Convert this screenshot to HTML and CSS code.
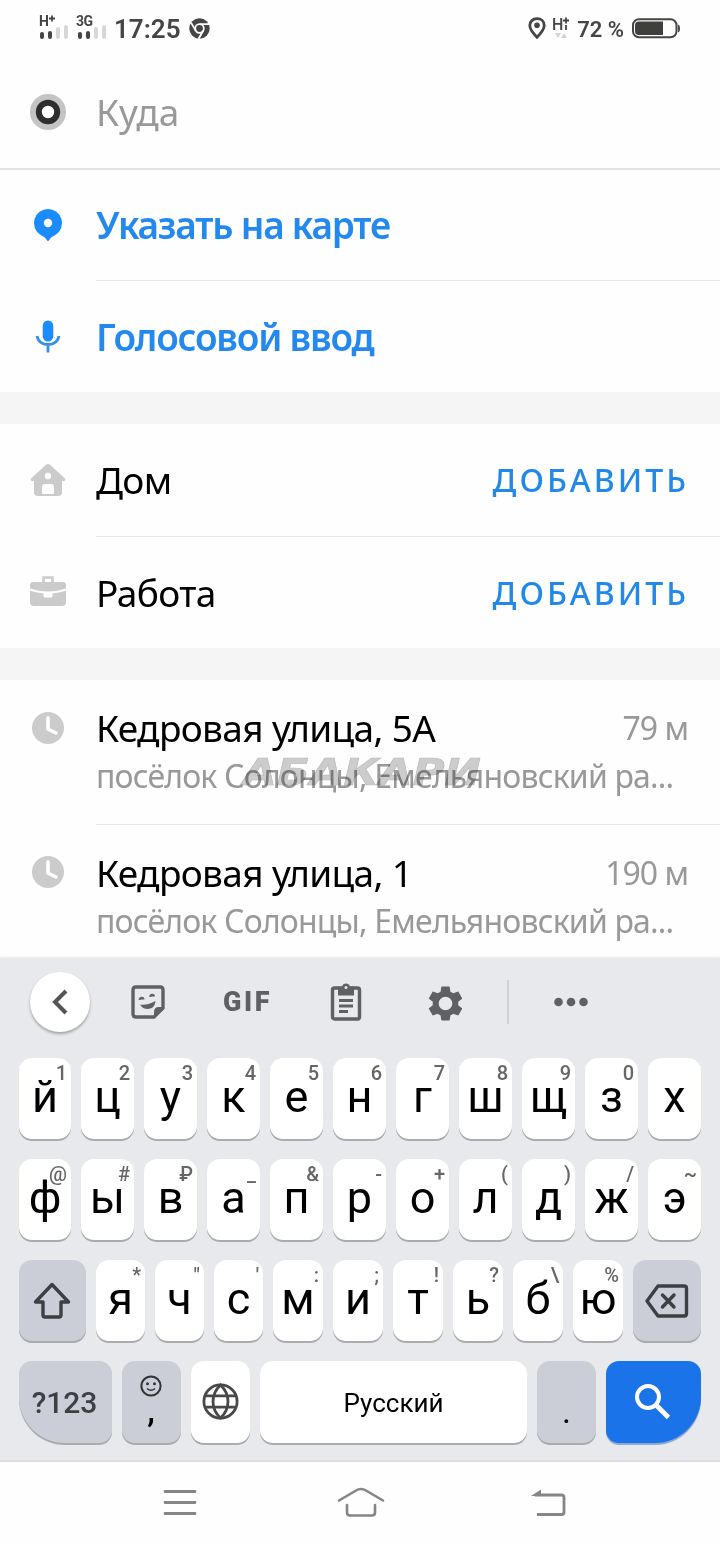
FILE: index.html
```html
<!DOCTYPE html>
<html lang="ru">
<head>
  <meta charset="UTF-8">
  <meta name="viewport" content="width=device-width, initial-scale=1.0">
  <title>Куда</title>
  <link rel="stylesheet" href="styles.css">
</head>
<body>

<!-- Status bar -->
<header class="status-bar">
  <div class="status-left">
    <svg class="signal" width="37" height="28" viewBox="0 0 37 28">
      <text x="0" y="11.500" class="signal-label">H</text>
      <path d="M10 4.500h6M13 1.500v6" stroke="#454545" stroke-width="1.800"/>
      <path d="M3 20v3M11 19v4" class="bar-on"/>
      <path d="M19 15v8M27 13v10" class="bar-off"/>
    </svg>
    <svg class="signal" width="37" height="28" viewBox="0 0 37 28">
      <text x="0" y="11.500" class="signal-label" textLength="17">3G</text>
      <path d="M4 20v3M12 19v4" class="bar-on"/>
      <path d="M20 15v8M28 13v10" class="bar-off"/>
    </svg>
    <span class="time">17:25</span>
    <svg class="chrome" width="21" height="21" viewBox="0 0 21 21">
      <circle cx="10.5" cy="10.5" r="10.2" fill="#454545"/>
      <circle cx="10.5" cy="10.5" r="4.3" fill="none" stroke="#fff" stroke-width="1.8"/>
      <path d="M10.5 6.200H20M6.800 12.700L2 4.600M14.200 12.700L9.600 20.800" stroke="#fff" stroke-width="1.8"/>
    </svg>
  </div>
  <div class="status-right">
    <svg class="location" width="18" height="23" viewBox="0 0 18 23">
      <path d="M9 1.700C4.800 1.700 1.800 4.600 1.800 8.500c0 4.500 4.500 9 7.200 11.800 2.700-2.800 7.200-7.300 7.200-11.800C16.200 4.600 13.200 1.700 9 1.700z" fill="none" stroke="#454545" stroke-width="2.800"/>
      <circle cx="9" cy="8.300" r="2.800" fill="#454545"/>
    </svg>
    <svg class="net" width="18" height="23" viewBox="0 0 18 23">
      <text x="0" y="12.500" class="net-label">H</text>
      <path d="M11 3.500h6M14 0.500v6M14 8v5" stroke="#454545" stroke-width="1.800"/>
      <path d="M3 16h6l-3 5zM9 21h6l-3-5z" fill="#d4d4d4"/>
    </svg>
    <span class="percent">72 %</span>
    <svg width="49" height="21" viewBox="0 0 49 21">
      <rect x="1" y="1.200" width="43.500" height="18" rx="6" fill="none" stroke="#454545" stroke-width="2"/>
      <path d="M7 3.500h24v13.500H7a4 4 0 0 1-4-4v-5.500a4 4 0 0 1 4-4z" fill="#3f3f3c"/>
      <path d="M46 6.500q2 .5 2 4t-2 4z" fill="#454545"/>
    </svg>
  </div>
</header>

<main class="content">
  <!-- Destination input -->
  <div class="row row-search">
    <svg class="icon" width="36" height="36" viewBox="0 0 36 36">
      <circle cx="18" cy="18" r="18" fill="#c4c4c4"/>
      <circle cx="18" cy="18" r="9.200" fill="#fff" stroke="#2e2e2e" stroke-width="6"/>
    </svg>
    <div class="row-body"><span class="title placeholder">Куда</span></div>
  </div>

  <!-- Actions -->
  <div class="row row-map">
    <svg class="icon" width="36" height="36" viewBox="0 0 36 36">
      <path d="M18 1a14 14 0 0 0-7.600 25.800c2.800 1.800 5 2.700 6.300 5.200.6 1.300 2 1.300 2.600 0 1.300-2.500 3.500-3.400 6.300-5.200A14 14 0 0 0 18 1z" fill="#1a8cff"/>
      <circle cx="18" cy="15" r="4.200" fill="#fff"/>
    </svg>
    <div class="row-body"><span class="title action">Указать на карте</span></div>
  </div>
  <div class="row row-last">
    <svg class="icon" width="36" height="36" viewBox="0 0 36 36">
      <rect x="12.700" y="1.500" width="10.600" height="21" rx="5.300" fill="#1a8cff"/>
      <path d="M7 17c1 5.500 5 8.500 11 8.500s10-3 11-8.500M18 25.500v8" fill="none" stroke="#3290e8" stroke-width="2.800"/>
    </svg>
    <div class="row-body"><span class="title action">Голосовой ввод</span></div>
  </div>

  <div class="divider"></div>

  <!-- Saved places -->
  <div class="row row-home">
    <svg class="icon" width="36" height="36" viewBox="0 0 36 36">
      <path fill-rule="evenodd" fill="#cbcbcb" d="M16 1.800q2-1.700 4 0L35 15.500q1 2.500-1.500 2.500H32v11q0 4-4 4H8q-4 0-4-4V18H2.500Q0 18 1 15.500zM18 9.800a3.200 3.200 0 1 0 0 6.400 3.200 3.200 0 0 0 0-6.400zM12 31h12v-7q0-3-3-3h-6q-3 0-3 3z"/>
    </svg>
    <div class="row-body">
      <span class="title">Дом</span>
      <a class="add">ДОБАВИТЬ</a>
    </div>
  </div>
  <div class="row row-last">
    <svg class="icon" width="36" height="36" viewBox="0 0 36 36">
      <path d="M13.500 8V2.500h9V8" fill="none" stroke="#cbcbcb" stroke-width="2.600"/>
      <path d="M3 7h30q3 0 3 3v3.500q-18 6-36 0V10q0-3 3-3z" fill="#cbcbcb"/>
      <path d="M0 15.800q7 2.200 13.500 2.600V21q0 1.500 1.500 1.500h6q1.500 0 1.500-1.500v-2.600q6.500-.4 13.500-2.600V27q0 4-4 4H4q-4 0-4-4z" fill="#cbcbcb"/>
    </svg>
    <div class="row-body">
      <span class="title">Работа</span>
      <a class="add">ДОБАВИТЬ</a>
    </div>
  </div>

  <div class="divider"></div>

  <!-- Suggestions -->
  <div class="row row-address">
    <svg class="icon" width="36" height="36" viewBox="0 0 36 36">
      <circle cx="18" cy="18" r="16" fill="#cbcbcb"/>
      <path d="M18 8v11l8 4" fill="none" stroke="#fff" stroke-width="3.600" stroke-linecap="round" stroke-linejoin="round"/>
    </svg>
    <div class="row-body">
      <div class="address">
        <span class="title">Кедровая улица, 5А</span>
        <span class="subtitle">посёлок Солонцы, Емельяновский ра...</span>
      </div>
      <span class="distance">79 м</span>
    </div>
    <svg class="watermark" width="244" height="36" viewBox="0 0 244 36">
      <text x="2" y="31.500" textLength="238" lengthAdjust="spacingAndGlyphs">АБАКАРИ</text>
    </svg>
  </div>
  <div class="row row-address row-last">
    <svg class="icon" width="36" height="36" viewBox="0 0 36 36">
      <circle cx="18" cy="18" r="16" fill="#cbcbcb"/>
      <path d="M18 8v11l8 4" fill="none" stroke="#fff" stroke-width="3.600" stroke-linecap="round" stroke-linejoin="round"/>
    </svg>
    <div class="row-body">
      <div class="address">
        <span class="title">Кедровая улица, 1</span>
        <span class="subtitle">посёлок Солонцы, Емельяновский ра...</span>
      </div>
      <span class="distance">190 м</span>
    </div>
  </div>
</main>

<!-- Keyboard -->
<section class="keyboard">
  <div class="toolbar">
    <div class="tool tool-back">
      <svg width="60" height="60" viewBox="0 0 60 60"><path d="M36 19L25 30l11 11" fill="none" stroke="#555" stroke-width="4"/></svg>
    </div>
    <div class="tool">
      <svg width="36" height="36" viewBox="0 0 36 36">
        <path d="M6 3h24q3 0 3 3v18l-9 9H6q-3 0-3-3V6q0-3 3-3z" fill="none" stroke="#5f6063" stroke-width="3.400"/>
        <path d="M24 34v-6q0-5 5-5h5zM10 20.500q8 1 15.500-3.500-.5 7.500-7.500 8-5.500 0-8-4.500z" fill="#5f6063"/>
        <path d="M8.500 16q.5-3 3-3.200t3.300 2.400zM19 13q.5-3 3-3.200t3.300 2.400z" fill="#5f6063"/>
      </svg>
    </div>
    <div class="tool gif">GIF</div>
    <div class="tool">
      <svg width="36" height="40" viewBox="0 0 36 40">
        <rect x="4.500" y="6" width="27" height="31" rx="2" fill="none" stroke="#5f6063" stroke-width="3.400"/>
        <path d="M10 4.500h4a4.200 4.200 0 0 1 8 0h4v9H10z" fill="#5f6063"/>
        <circle cx="18" cy="5.500" r="1.500" fill="#e8e9ed"/>
        <path d="M11 18.500h14M11 24h14M11 29.500h9" stroke="#5f6063" stroke-width="2.800"/>
      </svg>
    </div>
    <div class="tool tool-settings">
      <svg width="41" height="41" viewBox="0 0 24 24">
        <path fill="#5f6063" d="M19.430 12.980c.04-.32.070-.64.070-.98s-.03-.66-.07-.98l2.110-1.650c.19-.15.240-.42.120-.64l-2-3.460c-.12-.22-.39-.3-.61-.22l-2.490 1c-.52-.4-1.080-.73-1.690-.98l-.38-2.650A.49.49 0 0 0 14 2h-4c-.25 0-.46.180-.49.420l-.38 2.650c-.61.250-1.170.59-1.690.98l-2.490-1c-.23-.09-.49 0-.61.220l-2 3.460c-.13.220-.07.490.12.640l2.110 1.650c-.04.320-.07.650-.07.980s.03.660.070.980l-2.110 1.650c-.19.150-.24.420-.12.640l2 3.460c.12.220.390.300.610.220l2.490-1c.52.400 1.080.730 1.690.980l.38 2.650c.03.240.240.420.490.420h4c.25 0 .46-.18.490-.42l.38-2.650c.61-.25 1.170-.59 1.690-.98l2.490 1c.23.090.490 0 .61-.22l2-3.460c.12-.22.070-.49-.12-.64l-2.110-1.650zM12 16a4 4 0 1 1 0-8 4 4 0 0 1 0 8z"/>
      </svg>
    </div>
    <div class="tool-separator"></div>
    <div class="tool">
      <svg width="36" height="10" viewBox="0 0 36 10">
        <circle cx="5.500" cy="5" r="4.300" fill="#5f6063"/><circle cx="18" cy="5" r="4.300" fill="#5f6063"/><circle cx="30.500" cy="5" r="4.300" fill="#5f6063"/>
      </svg>
    </div>
  </div>

  <div class="keys keys-top">
    <div class="key">й<span class="hint">1</span></div>
    <div class="key">ц<span class="hint">2</span></div>
    <div class="key">у<span class="hint">3</span></div>
    <div class="key">к<span class="hint">4</span></div>
    <div class="key">е<span class="hint">5</span></div>
    <div class="key">н<span class="hint">6</span></div>
    <div class="key">г<span class="hint">7</span></div>
    <div class="key">ш<span class="hint">8</span></div>
    <div class="key">щ<span class="hint">9</span></div>
    <div class="key">з<span class="hint">0</span></div>
    <div class="key">х</div>
  </div>
  <div class="keys keys-top">
    <div class="key">ф<span class="hint">@</span></div>
    <div class="key">ы<span class="hint">#</span></div>
    <div class="key">в<span class="hint">₽</span></div>
    <div class="key">а<span class="hint">_</span></div>
    <div class="key">п<span class="hint">&amp;</span></div>
    <div class="key">р<span class="hint">-</span></div>
    <div class="key">о<span class="hint">+</span></div>
    <div class="key">л<span class="hint">(</span></div>
    <div class="key">д<span class="hint">)</span></div>
    <div class="key">ж<span class="hint">/</span></div>
    <div class="key">э<span class="hint">~</span></div>
  </div>
  <div class="keys keys-shift">
    <div class="key key-dark key-icon">
      <svg width="40" height="38" viewBox="0 0 40 38"><path d="M19 2.500L2.500 20H10v13q0 2 2 2h14q2 0 2-2V20h7.500z" fill="none" stroke="#3c4043" stroke-width="3.400" stroke-linejoin="round"/></svg>
    </div>
    <div class="key">я<span class="hint">*</span></div>
    <div class="key">ч<span class="hint">"</span></div>
    <div class="key">с<span class="hint">'</span></div>
    <div class="key">м<span class="hint">:</span></div>
    <div class="key">и<span class="hint">;</span></div>
    <div class="key">т<span class="hint">!</span></div>
    <div class="key">ь<span class="hint">?</span></div>
    <div class="key">б<span class="hint">\</span></div>
    <div class="key">ю<span class="hint">%</span></div>
    <div class="key key-dark key-icon">
      <svg width="44" height="36" viewBox="0 0 44 36"><path d="M13 3h26q2.500 0 2.500 2.500v25q0 2.500-2.500 2.500H13L2 18z" fill="none" stroke="#3c4043" stroke-width="3.400" stroke-linejoin="round"/><path d="M17.500 12L29 24M29 12L17.500 24" stroke="#3c4043" stroke-width="3.400" stroke-linecap="round"/></svg>
    </div>
  </div>
  <div class="keys keys-bottom">
    <div class="key key-dark key-symbols">?123</div>
    <div class="key key-dark key-comma">
      <svg width="22" height="22" viewBox="0 0 22 22"><circle cx="11" cy="11" r="9.600" fill="none" stroke="#333" stroke-width="2"/><circle cx="7.500" cy="8.800" r="1.500" fill="#333"/><circle cx="14.500" cy="8.800" r="1.500" fill="#333"/><path d="M7 13.500q4 3.500 8 0" fill="none" stroke="#333" stroke-width="1.600"/></svg>
      <span class="comma">,</span>
    </div>
    <div class="key key-icon">
      <svg width="38" height="38" viewBox="0 0 38 38"><g fill="none" stroke="#484848" stroke-width="2.800"><circle cx="18.500" cy="18.500" r="16.600"/><path d="M18.500 2q-7.500 7-7.500 16.500T18.500 35q7.500-7 7.500-16.500T18.500 2zM3.500 12.800h30M3.500 24.200h30"/></g></svg>
    </div>
    <div class="key key-space">Русский</div>
    <div class="key key-dark key-dot">.</div>
    <div class="key key-search key-icon">
      <svg width="36" height="36" viewBox="0 0 36 36"><circle cx="13" cy="13" r="11" fill="none" stroke="#fff" stroke-width="4"/><path d="M20.500 20.500l13 13" stroke="#fff" stroke-width="4.800"/></svg>
    </div>
  </div>
</section>

<!-- System navigation -->
<nav class="nav-bar">
  <svg width="34" height="28" viewBox="0 0 34 28"><path d="M2 2.500h30M2 13.500h30M2 24.500h30" stroke="#858585" stroke-width="2.800" stroke-linecap="round"/></svg>
  <svg width="48" height="32" viewBox="0 0 48 32"><path d="M2 13.500L19 3.500q5-3 10 0l17 10M10 18v7.500q0 3 3 3h22q3 0 3-3V18" fill="none" stroke="#858585" stroke-width="2.600" stroke-linecap="round"/></svg>
  <svg width="36" height="30" viewBox="0 0 36 30"><path d="M4 7h26.500q2.500 0 2.500 2.500V24q0 2.500-2.500 2.500H6" fill="none" stroke="#858585" stroke-width="2.800"/><path d="M0 8L10 1.500V8z" fill="#858585"/></svg>
</nav>

</body>
</html>
```

FILE: styles.css
```css
/* Global Styles */
* {
  box-sizing: border-box;
}
body {
  margin: 0;
  width: 720px;
  height: 1544px;
  display: flex;
  flex-direction: column;
  overflow: hidden;
  background-color: #fefefe;
  color: #000;
  font-family: "Noto Sans", "Open Sans", sans-serif;
}
svg {
  display: block;
  flex-shrink: 0;
  overflow: visible;
}

/* Status bar */
.status-bar {
  height: 56px;
  padding: 0 39px;
  display: flex;
  justify-content: space-between;
  align-items: center;
  color: #454545;
  font-family: Roboto, sans-serif;
}
.status-left, .status-right {
  display: flex;
  align-items: center;
}
.signal-label {
  font-size: 14px;
  font-weight: 700;
  fill: #454545;
}
.bar-on, .bar-off {
  stroke: #454545;
  stroke-width: 4;
  stroke-linecap: round;
}
.bar-off {
  stroke: #d8d8d8;
}
.time {
  margin-left: 1px;
  padding-top: 2px;
  font-size: 26px;
  font-weight: 600;
}
.chrome {
  margin-left: 8px;
}
.net {
  margin-left: 6px;
}
.net-label {
  font-size: 16px;
  font-weight: 500;
  fill: #454545;
}
.percent {
  margin: 0 8px 0 7px;
  padding-top: 3px;
  font-size: 22px;
  font-weight: 600;
}

/* List rows */
.content {
  height: 902px;
  display: flex;
  flex-direction: column;
}
.row {
  position: relative;
  flex: 0 0 112px;
  display: flex;
  align-items: center;
}
.row-search {
  flex-basis: 114px;
  border-bottom: 2px solid #e2e2e2;
}
.row-map, .row-last {
  flex-basis: 111px;
}
.row-home {
  flex-basis: 113px;
}
.icon {
  margin: 0 30px;
}
.row-body {
  flex: 1;
  height: 100%;
  padding-right: 31px;
  display: flex;
  justify-content: space-between;
  align-items: center;
  border-bottom: 1px solid #e9e9e9;
}
.row-search .row-body, .row-last .row-body {
  border-bottom: none;
}
.title {
  font-size: 37px;
  line-height: 48px;
  letter-spacing: -0.65px;
  white-space: nowrap;
}
.placeholder {
  color: #999;
  letter-spacing: 0.2px;
}
.action {
  color: #2389ee;
  font-weight: 600;
  letter-spacing: -1.2px;
}
.add {
  color: #2389e8;
  font-size: 32px;
  font-weight: 500;
  letter-spacing: 3px;
  line-height: 48px;
}
.divider {
  flex: 0 0 32px;
  background-color: #f5f5f5;
}
.row-address {
  flex-basis: 145px;
  align-items: flex-start;
}
.row-address .icon {
  margin-top: 30px;
}
.row-address .row-body {
  padding-top: 24px;
  padding-right: 32px;
  align-items: flex-start;
}
.row-address.row-last .icon {
  margin-top: 29px;
}
.row-address.row-last .row-body {
  padding-top: 24px;
}
.address {
  display: flex;
  flex-direction: column;
}
.subtitle {
  color: #999;
  font-size: 32px;
  line-height: 48px;
  letter-spacing: -0.82px;
  white-space: nowrap;
}
.distance {
  width: 0;
  display: flex;
  justify-content: flex-end;
  color: #999;
  font-size: 32px;
  line-height: 48px;
  letter-spacing: -1px;
  white-space: nowrap;
}
.watermark {
  position: absolute;
  left: 241px;
  top: 73px;
  font-family: "DejaVu Sans", sans-serif;
  font-size: 38px;
  font-weight: 700;
  font-style: italic;
  fill: #cdcdcd;
  stroke: #bdbdbd;
  stroke-width: 0.7px;
  mix-blend-mode: multiply;
}

/* Keyboard */
.keyboard {
  position: relative;
  height: 504px;
  padding: 0 19px;
  display: flex;
  flex-direction: column;
  background-color: #e8e9ed;
  border-bottom: 2px solid #dcdcdd;
  box-shadow: 0 -1px 2px rgba(0, 0, 0, 0.08);
  font-family: Roboto, sans-serif;
}
.toolbar {
  flex: 0 0 100px;
  padding: 0 0 12px 11px;
  display: grid;
  grid-template-columns: 60px 116px 80px 120px 78px 48px 78px;
  align-items: center;
}
.tool {
  display: flex;
  justify-content: center;
}
.tool-back {
  border-radius: 50%;
  background-color: #fff;
  box-shadow: 0 2px 3px rgba(0, 0, 0, 0.3);
}
.tool-settings {
  padding: 2px 0 0 1px;
}
.gif {
  padding-left: 3px;
  color: #5f6063;
  font-size: 27px;
  font-weight: 900;
  letter-spacing: 2.5px;
}
.tool-separator {
  width: 2px;
  height: 44px;
  justify-self: center;
  background-color: #cfd0d4;
}
.keys {
  flex: 0 0 101px;
  display: grid;
  column-gap: 10px;
  align-items: start;
}
.keys-top {
  grid-template-columns: 52px repeat(10, 53px);
}
.keys-shift {
  grid-template-columns: 67px repeat(3, 49px) repeat(6, 50px) 68px;
}
.keys-bottom {
  flex-basis: 83px;
  grid-template-columns: 93px 59px 59px 267px 59px 95px;
}
.key {
  position: relative;
  height: 81px;
  padding-bottom: 5px;
  display: flex;
  justify-content: center;
  align-items: center;
  border-radius: 13px;
  background-color: #fff;
  box-shadow: 0 2px 0 #a9abae;
  font-size: 45px;
  line-height: 45px;
}
.keys-bottom .key {
  height: 82px;
}
.key-icon {
  padding-bottom: 0;
}
.hint {
  position: absolute;
  top: 4px;
  right: 4px;
  color: #666;
  font-size: 20px;
  font-weight: 500;
  line-height: 22px;
}
.key-dark {
  background-color: #cbced6;
}
.keys-bottom .key-symbols {
  padding: 1px 2px 0 0;
  border-bottom-left-radius: 46px;
  color: #3c4043;
  font-size: 30px;
  font-weight: 500;
}
.key-comma {
  flex-direction: column;
  justify-content: flex-start;
  padding: 14px 1px 0 0;
  font-size: 34px;
  font-weight: 500;
  line-height: 34px;
}
.comma {
  margin-top: -4px;
}
.key-space {
  padding: 2px 0 0;
  font-size: 26px;
}
.keys-bottom .key-dot {
  align-items: flex-end;
  padding-bottom: 16px;
  font-size: 34px;
  line-height: 32px;
}
.keys-bottom .key-search {
  padding-right: 2px;
  border-bottom-right-radius: 46px;
  background-color: #1a73e8;
  box-shadow: 0 2px 0 #8fa9d3;
}

/* System navigation */
.nav-bar {
  height: 82px;
  padding: 0 153px 0 163px;
  display: grid;
  grid-template-columns: 174px 194px 36px;
  align-items: center;
}
```
